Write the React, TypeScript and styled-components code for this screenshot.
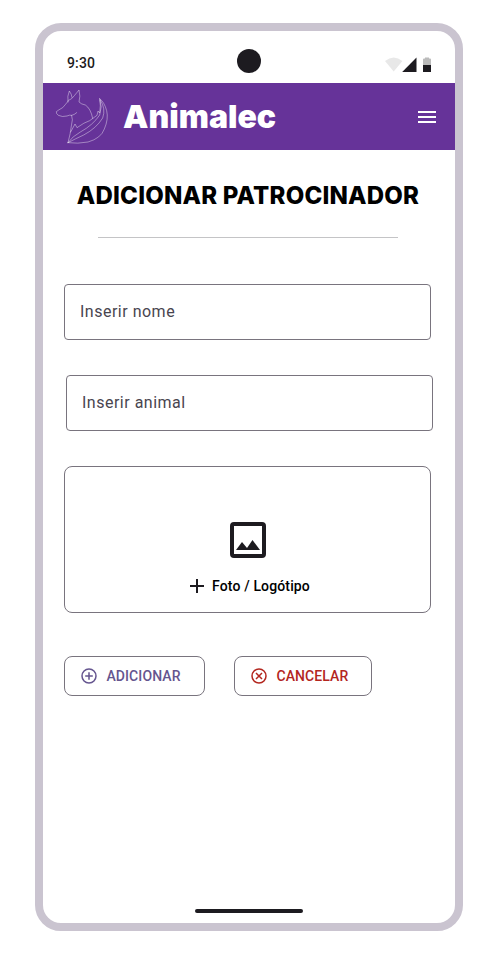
import React from 'react';
import styled, { createGlobalStyle } from 'styled-components';

const GlobalStyle = createGlobalStyle`
  * { box-sizing: border-box; }
  body { margin: 0; background: #fff; }
`;

const Page = styled.div`
  width: 498px;
  height: 954px;
  padding: 23px 35px;
  overflow: hidden;
  font-family: Roboto, sans-serif;
`;

const Phone = styled.main`
  width: 428px;
  height: 908px;
  display: flex;
  flex-direction: column;
  border: 8px solid #cac4d0;
  border-radius: 26px;
  background: #fff;
  overflow: hidden;
`;

const StatusBar = styled.div`
  position: relative;
  height: 52px;
  flex: none;
  display: flex;
  justify-content: space-between;
  padding: 24px 23px 0 24px;
`;

const Clock = styled.span`
  font-size: 14px;
  line-height: 17px;
  font-weight: 500;
  letter-spacing: 0.14px;
  color: #1d1b20;
`;

const Camera = styled.div`
  position: absolute;
  left: 194px;
  top: 18px;
  width: 24px;
  height: 24px;
  border-radius: 50%;
  background: #1d1b20;
`;

const StatusIcons = styled.svg`
  display: block;
  margin-top: 2px;
`;

const Header = styled.header`
  height: 67px;
  flex: none;
  display: flex;
  align-items: center;
  padding: 0 19px 0 7px;
  background: #663399;
`;

const Logo = styled.svg`
  flex: none;
  margin-bottom: 2px;
`;

const Brand = styled.span`
  flex: 1;
  margin-left: 9px;
  font-family: Inter, sans-serif;
  font-size: 32px;
  line-height: 40px;
  font-weight: 900;
  color: #fff;
`;

const MenuButton = styled.button`
  width: 18px;
  height: 12px;
  padding: 0;
  border: 0;
  background: none;
  display: flex;
  flex-direction: column;
  justify-content: space-between;
  margin-top: 1px;
`;

const MenuLine = styled.span`
  height: 2px;
  background: #fff;
`;

const Title = styled.h1`
  margin: 30px 2px 0 0;
  font-family: Inter, sans-serif;
  font-size: 24px;
  line-height: 32px;
  font-weight: 800;
  letter-spacing: 0.21px;
  text-align: center;
  white-space: nowrap;
  color: #000;
`;

const Divider = styled.hr`
  width: 300px;
  height: 1px;
  margin: 25px 0 46px 55px;
  border: 0;
  background: #c4c4c6;
`;

const Form = styled.form`
  display: flex;
  flex-direction: column;
  padding-left: 21px;
`;

const Field = styled.input<{ $shift?: number }>`
  width: 367px;
  height: 56px;
  margin: 0 0 35px ${(p) => p.$shift ?? 0}px;
  padding: 0 15px 2px;
  border: 1px solid #79747e;
  border-radius: 4px;
  background: #fff;
  outline: none;
  font-family: Roboto, sans-serif;
  font-size: 16px;
  letter-spacing: 0.5px;
  &::placeholder { color: #49454f; opacity: 1; }
`;

const PhotoBox = styled.div`
  width: 367px;
  height: 147px;
  padding: 55px 0 0;
  display: flex;
  flex-direction: column;
  align-items: center;
  border: 1px solid #79747e;
  border-radius: 8px;
`;

const PhotoLabel = styled.div`
  display: flex;
  align-items: center;
  gap: 8.5px;
  margin: 18px 0 0 4.5px;
  font-size: 14px;
  line-height: 20px;
  font-weight: 500;
  letter-spacing: 0.14px;
  color: #000;
`;

const Actions = styled.div`
  display: flex;
  gap: 29px;
  margin-top: 43px;
`;

const ActionButton = styled.button<{ $color: string; $width: number }>`
  width: ${(p) => p.$width}px;
  height: 40px;
  padding: 0 0 0 15px;
  display: flex;
  align-items: center;
  gap: 8.4px;
  border: 1px solid #79747e;
  border-radius: 8px;
  background: #fff;
  color: ${(p) => p.$color};
  font-family: Roboto, sans-serif;
  font-size: 14px;
  line-height: 20px;
  font-weight: 500;
  letter-spacing: 0.1px;
`;

const HomeBar = styled.div`
  width: 108px;
  height: 4px;
  margin: auto auto 10px;
  border-radius: 2px;
  background: #1d1b20;
`;

const FoxLogo = () => (
  <Logo width="64" height="64" viewBox="0 0 192 192" fill="none" stroke="#fff" strokeOpacity=".7" strokeWidth="1.7" strokeLinejoin="round" strokeLinecap="round">
    <path d="M54 54 Q51 36 58 21 Q65 30 66 40" />
    <path d="M54 50 Q66 46 73 35 L87 18 Q92 37 87 54 Q94 61 106 63 Q122 73 128 103" />
    <path d="M54 52 Q46 62 38 71 Q25 78 19 83 Q18 89 25 94 Q37 100 51 96 Q59 92 65 94 Q72 93 80 86" />
    <path d="M65 94 Q70 105 64 126 Q62 147 54 176" />
    <path d="M62 144 L75 120 L81 131 Q103 115 119 110 L141 94 L144 81 L149 87 Q153 66 149 44" />
    <path d="M149 44 Q163 54 170 80 Q176 105 163 135 Q153 163 114 174 Q83 180 54 176" />
    <path d="M151 48 Q168 74 158 102 Q139 133 101 153 Q77 164 54 176" />
    <path d="M150 48 Q158 67 149 93 Q129 123 91 144 Q67 157 54 176" />
  </Logo>
);

export default function App() {
  return (
    <>
      <GlobalStyle />
      <Page>
        <Phone>
          <StatusBar>
            <Clock>9:30</Clock>
            <Camera />
            <StatusIcons width="47" height="16" viewBox="0 0 47 16">
              <path d="M0 4Q8.700-3 17.4 4L8.700 14.5Z" fill="#e8e8e8" />
              <path d="M17.200 15 31.5.5V15Z" fill="#1d1b20" />
              <path d="M38 8V2.5Q38 1.5 39 1.5H40V.5H44V1.5H45Q46 1.5 46 2.5V8Z" fill="#bbb" />
              <path d="M38 8H46V15H38Z" fill="#1d1b20" />
            </StatusIcons>
          </StatusBar>
          <Header>
            <FoxLogo />
            <Brand>Animalec</Brand>
            <MenuButton aria-label="Menu">
              <MenuLine />
              <MenuLine />
              <MenuLine />
            </MenuButton>
          </Header>
          <Title>ADICIONAR PATROCINADOR</Title>
          <Divider />
          <Form>
            <Field placeholder="Inserir nome" />
            <Field placeholder="Inserir animal" $shift={2} />
            <PhotoBox>
              <svg width="36" height="36" viewBox="0 0 36 36">
                <rect x="2" y="2" width="32" height="32" rx="2" fill="none" stroke="#1d1b20" strokeWidth="4" />
                <path d="M6 28 12 20 17 26 22.5 18 30 28Z" fill="#1d1b20" />
              </svg>
              <PhotoLabel>
                <svg width="14" height="14" viewBox="0 0 14 14">
                  <path d="M6 0H8V6H14V8H8V14H6V8H0V6H6Z" fill="#1d1b20" />
                </svg>
                Foto / Logótipo
              </PhotoLabel>
            </PhotoBox>
            <Actions>
              <ActionButton type="button" $color="#65558f" $width={141}>
                <svg width="18" height="18" viewBox="0 0 18 18" fill="none" stroke="currentColor" strokeWidth="1.5">
                  <circle cx="9" cy="9" r="7" />
                  <path d="M9 5.2V12.8M5.2 9H12.8" />
                </svg>
                ADICIONAR
              </ActionButton>
              <ActionButton type="button" $color="#b3261e" $width={138}>
                <svg width="18" height="18" viewBox="0 0 18 18" fill="none" stroke="currentColor" strokeWidth="1.5">
                  <circle cx="9" cy="9" r="7" />
                  <path d="M6 6 12 12M12 6 6 12" />
                </svg>
                CANCELAR
              </ActionButton>
            </Actions>
          </Form>
          <HomeBar />
        </Phone>
      </Page>
    </>
  );
}
